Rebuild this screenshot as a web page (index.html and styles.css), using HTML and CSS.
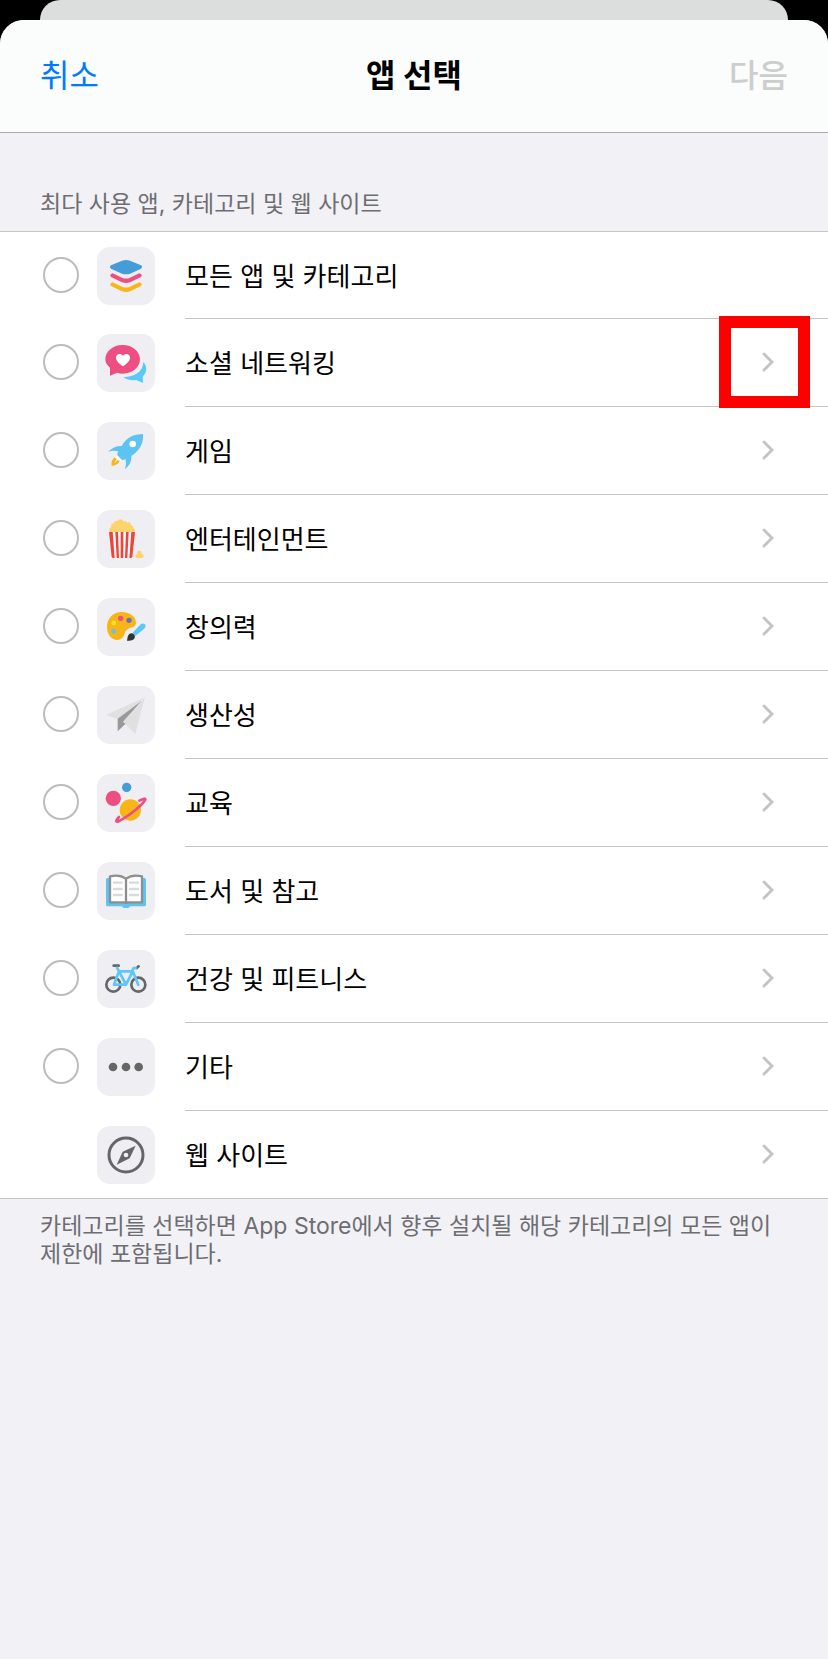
FILE: index.html
```html
<!DOCTYPE html>
<html lang="ko">
<head>
    <meta charset="UTF-8">
    <meta name="viewport" content="width=device-width, initial-scale=1.0">
    <title>앱 선택</title>
    <link rel="stylesheet" href="styles.css">
</head>
<body>
    <div class="back"></div>
    <div class="sheet">
        <header class="head">
            <button class="btn cancel" type="button">취소</button>
            <h1 class="title">앱 선택</h1>
            <button class="btn next" type="button" disabled>다음</button>
        </header>
        <main>
            <h2 class="caption">최다 사용 앱, 카테고리 및 웹 사이트</h2>
            <ul class="list">
                <li class="row">
                    <input class="check" type="checkbox" id="all">
                    <svg class="icon" viewBox="0 0 174 174">
                        <path fill="#449cd8" d="M42 55L75 41Q87 37 99 41L132 55Q138 60 132 65L99 80Q87 84 75 80L42 65Q36 60 42 55Z"/>
                        <path fill="#ec4f80" d="M47 79L75 92Q87 97 99 92L127 79L132 81Q137 86 132 90L99 106Q87 110 75 106L42 90Q37 86 42 81Z"/>
                        <path fill="#f9b518" d="M47 106L75 119Q87 124 99 119L127 106L132 108Q137 113 132 117L99 133Q87 137 75 133L42 117Q37 113 42 108Z"/>
                    </svg>
                    <label class="name" for="all">모든 앱 및 카테고리</label>
                </li>
                <li class="row">
                    <input class="check" type="checkbox" id="social">
                    <svg class="icon" viewBox="0 0 174 174">
                        <path fill="#5ac8fa" d="M139 84C150 96 152 114 137 128L138 147L118 138C103 140 90 138 79 129C108 130 138 116 139 84Z"/>
                        <path fill="#ec4f80" d="M77 33C106 33 129 52 129 76S106 119 77 119Q68 119 60 116L39 125V101Q25 90 25 76C25 52 48 33 77 33Z"/>
                        <path fill="#fff" d="M78 97C68 90 57 81 57 71C57 59 72 56 78 66C84 56 99 59 99 71C99 81 88 90 78 97Z"/>
                    </svg>
                    <label class="name" for="social">소셜 네트워킹</label>
                    <button class="more" type="button" aria-label="소셜 네트워킹"><svg class="arrow" viewBox="0 0 12 20"><path d="M2 2L10 10L2 18"/></svg><span class="mark"></span></button>
                </li>
                <li class="row">
                    <input class="check" type="checkbox" id="game">
                    <svg class="icon" viewBox="0 0 174 174">
                        <path fill="#5bc4f1" d="M138 36C110 36 88 46 74 72C58 70 44 78 33 90Q48 84 63 88L60 101L74 115L86 112Q89 127 84 142C98 130 104 118 103 102C130 84 140 62 138 36Z"/>
                        <path fill="#fff" d="M60 99L53 107L67 121L76 115Z"/>
                        <circle fill="#fff" cx="107" cy="66" r="10"/>
                        <path fill="#f9b518" d="M53 106Q40 118 44 131Q60 131 69 116L61 115Q58 120 53 123Q55 116 59 112Z"/>
                    </svg>
                    <label class="name" for="game">게임</label>
                    <button class="more" type="button" aria-label="게임"><svg class="arrow" viewBox="0 0 12 20"><path d="M2 2L10 10L2 18"/></svg></button>
                </li>
                <li class="row">
                    <input class="check" type="checkbox" id="movie">
                    <svg class="icon" viewBox="0 0 174 174">
                        <g fill="#fdd36d">
                            <circle cx="45" cy="59" r="8"/><circle cx="49" cy="47" r="7"/><circle cx="58" cy="39" r="7"/><circle cx="70" cy="36" r="8"/><circle cx="83" cy="40" r="7"/><circle cx="95" cy="44" r="7"/><circle cx="102" cy="53" r="7"/><circle cx="107" cy="61" r="7"/>
                            <path d="M40 67L50 45L70 34L94 46L112 67Z"/>
                            <circle cx="121" cy="138" r="6"/><circle cx="134" cy="138" r="6"/><circle cx="127" cy="129" r="7"/><path d="M121 133H134V144H121Z"/>
                        </g>
                        <path fill="#ef443b" d="M36 66H114L106 140Q105 144 101 144H49Q45 144 44 140Z"/>
                        <path fill="#fff" d="M47 66H55L59 144H53ZM63 66H71V144H66ZM79 66H87L84 144H79ZM95 66H103L97 144H91Z"/>
                    </svg>
                    <label class="name" for="movie">엔터테인먼트</label>
                    <button class="more" type="button" aria-label="엔터테인먼트"><svg class="arrow" viewBox="0 0 12 20"><path d="M2 2L10 10L2 18"/></svg></button>
                </li>
                <li class="row">
                    <input class="check" type="checkbox" id="art">
                    <svg class="icon" viewBox="0 0 174 174">
                        <path fill="#f9b518" d="M75 42C100 42 118 58 117 76C115 92 98 86 89 96C80 106 82 124 62 126C42 126 30 108 30 86C30 60 50 42 75 42Z"/>
                        <circle fill="#ec4f80" cx="71" cy="61" r="8"/>
                        <circle fill="#6b6fb3" cx="96" cy="67" r="8"/>
                        <circle fill="#ffe81a" cx="50" cy="75" r="7"/>
                        <circle fill="#5bc4f1" cx="50" cy="100" r="7"/>
                        <path fill="#5ac8fa" d="M107 104L132 78Q138 74 144 79Q149 85 143 91L115 114Z"/>
                        <path fill="#333" d="M90 128Q91 120 93 113Q97 105 106 106Q116 111 113 120Q108 130 90 128Z"/>
                    </svg>
                    <label class="name" for="art">창의력</label>
                    <button class="more" type="button" aria-label="창의력"><svg class="arrow" viewBox="0 0 12 20"><path d="M2 2L10 10L2 18"/></svg></button>
                </li>
                <li class="row">
                    <input class="check" type="checkbox" id="work">
                    <svg class="icon" viewBox="0 0 174 174">
                        <path fill="#e0e0e0" d="M144 34L27 87L62 99ZM144 34L78 107L115 144Z"/>
                        <path fill="#999" d="M134 44L62 98V136L85 114L78 107Z"/>
                    </svg>
                    <label class="name" for="work">생산성</label>
                    <button class="more" type="button" aria-label="생산성"><svg class="arrow" viewBox="0 0 12 20"><path d="M2 2L10 10L2 18"/></svg></button>
                </li>
                <li class="row">
                    <input class="check" type="checkbox" id="edu">
                    <svg class="icon" viewBox="0 0 174 174">
                        <circle fill="#449cd8" cx="89" cy="40" r="14"/>
                        <circle fill="#ec4f80" cx="49" cy="73" r="23"/>
                        <circle fill="#f9b518" cx="100" cy="108" r="32"/>
                        <path fill="none" stroke="#ec4f80" stroke-width="8" stroke-linecap="round" d="M127 80Q145 71 145 76Q143 84 118 106Q84 134 62 143Q52 144 66 129"/>
                    </svg>
                    <label class="name" for="edu">교육</label>
                    <button class="more" type="button" aria-label="교육"><svg class="arrow" viewBox="0 0 12 20"><path d="M2 2L10 10L2 18"/></svg></button>
                </li>
                <li class="row">
                    <input class="check" type="checkbox" id="book">
                    <svg class="icon" viewBox="0 0 174 174">
                        <path fill="#5bc4f1" d="M32 48H142Q147 48 147 53V128Q147 133 142 133H99Q98 138 93 138H81Q76 138 75 133H32Q27 133 27 128V53Q27 48 32 48Z"/>
                        <path fill="#fff" stroke="#8e8e8e" stroke-width="7" stroke-linejoin="round" d="M39 43Q68 36 87 50Q106 36 135 43V121H39ZM87 50V126"/>
                        <path stroke="#dadada" stroke-width="7" d="M48 62H77M48 81H77M48 99H77M96 62H126M96 81H126M96 99H126"/>
                    </svg>
                    <label class="name" for="book">도서 및 참고</label>
                    <button class="more" type="button" aria-label="도서 및 참고"><svg class="arrow" viewBox="0 0 12 20"><path d="M2 2L10 10L2 18"/></svg></button>
                </li>
                <li class="row">
                    <input class="check" type="checkbox" id="health">
                    <svg class="icon" viewBox="0 0 174 174">
                        <g fill="none" stroke="#666" stroke-width="8">
                            <circle cx="49" cy="104" r="21"/><circle cx="124" cy="104" r="21"/>
                            <path stroke-linecap="round" d="M50 47H65M119 54L125 49"/>
                        </g>
                        <path fill="none" stroke="#5ac8fa" stroke-width="8" stroke-linecap="round" stroke-linejoin="round" d="M60 53L66 64L51 104H87L66 64H107L87 104M116 54H110L106 61L124 104"/>
                    </svg>
                    <label class="name" for="health">건강 및 피트니스</label>
                    <button class="more" type="button" aria-label="건강 및 피트니스"><svg class="arrow" viewBox="0 0 12 20"><path d="M2 2L10 10L2 18"/></svg></button>
                </li>
                <li class="row">
                    <input class="check" type="checkbox" id="etc">
                    <svg class="icon" viewBox="0 0 174 174" fill="#666">
                        <circle cx="48" cy="87" r="13"/><circle cx="87" cy="87" r="13"/><circle cx="125" cy="87" r="13"/>
                    </svg>
                    <label class="name" for="etc">기타</label>
                    <button class="more" type="button" aria-label="기타"><svg class="arrow" viewBox="0 0 12 20"><path d="M2 2L10 10L2 18"/></svg></button>
                </li>
                <li class="row web">
                    <svg class="icon" viewBox="0 0 174 174">
                        <circle fill="none" stroke="#666" stroke-width="9" cx="87" cy="87" r="51"/>
                        <path fill="#666" d="M116 59L98 97L59 116L77 77Z"/>
                        <circle fill="#efeef3" cx="87" cy="87" r="7"/>
                    </svg>
                    <span class="name">웹 사이트</span>
                    <button class="more" type="button" aria-label="웹 사이트"><svg class="arrow" viewBox="0 0 12 20"><path d="M2 2L10 10L2 18"/></svg></button>
                </li>
            </ul>
            <p class="note">카테고리를 선택하면 App Store에서 향후 설치될 해당 카테고리의 모든 앱이 제한에 포함됩니다.</p>
        </main>
    </div>
</body>
</html>
```
FILE: styles.css
```css
*{
    margin: 0;
    padding: 0;
    box-sizing: border-box;
}
body{
    min-height: 100vh;
    display: flex;
    flex-direction: column;
    background: #000;
    font-family: Inter, "Noto Sans CJK KR", sans-serif;
}
.back{
    height: 20px;
    margin: 0 40px;
    background: #dcdddd;
    border-radius: 20px 20px 0 0;
}
.sheet{
    flex: 1;
    background: #f2f1f6;
    border-radius: 24px 24px 0 0;
    overflow: hidden;
}
.head{
    display: grid;
    grid-template-columns: 1fr auto 1fr;
    align-items: center;
    height: 113px;
    padding: 0 40px;
    background: #fbfcfc;
    border-bottom: 1px solid #a9a9ac;
}
.btn{
    border: none;
    background: none;
    font-family: inherit;
    font-size: 32px;
    line-height: 44px;
    cursor: pointer;
}
.cancel{
    justify-self: start;
    color: #007aff;
}
.next{
    justify-self: end;
    color: #cdcdce;
    font-weight: 500;
}
.title{
    font-size: 32px;
    line-height: 44px;
    font-weight: 700;
}
.caption{
    padding: 55px 40px 11px;
    font-size: 23px;
    line-height: 32px;
    font-weight: 400;
    color: #6d6d72;
}
.list{
    list-style: none;
    background: #fff;
    border-top: 1px solid #c6c6c8;
    border-bottom: 1px solid #c6c6c8;
}
.row{
    display: flex;
    align-items: center;
    height: 88px;
    padding-left: 43px;
}
.row:first-child, .row:last-child{
    height: 87px;
}
.check{
    appearance: none;
    width: 36px;
    height: 36px;
    margin-right: 18px;
    margin-bottom: 2px;
    border: 2px solid #bcbcbe;
    border-radius: 50%;
}
.check:checked{
    background: #007aff;
    border-color: #007aff;
}
.icon{
    width: 58px;
    height: 58px;
    margin-right: 30px;
    background: #efeef3;
    border-radius: 13px;
}
.web{
    padding-left: 97px;
}
.name{
    flex: 1;
    align-self: stretch;
    display: flex;
    align-items: center;
    padding-bottom: 2px;
    border-bottom: 1px solid #c6c6c8;
    font-size: 26px;
    color: #000;
}
.more{
    position: relative;
    align-self: stretch;
    display: flex;
    align-items: center;
    padding: 0 54px 2px 30px;
    border: none;
    border-bottom: 1px solid #c6c6c8;
    background: none;
    cursor: pointer;
}
.web .name, .web .more{
    border-bottom: none;
}
.arrow{
    width: 12px;
    height: 20px;
    fill: none;
    stroke: #c4c4c6;
    stroke-width: 3;
    stroke-linecap: round;
}
/* red frame over the arrow */
.mark{
    position: absolute;
    top: -3px;
    right: 18px;
    width: 91px;
    height: 92px;
    border: 12px solid #f00;
}
.note{
    padding: 13px 40px;
    font-size: 23px;
    line-height: 28px;
    color: #6d6d72;
}
```
